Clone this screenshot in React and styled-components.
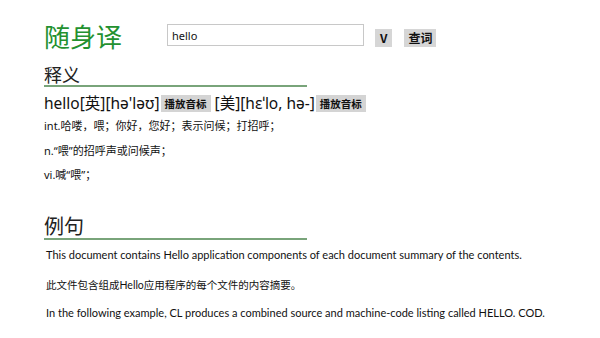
import React from "react";
import styled, { createGlobalStyle } from "styled-components";

const GlobalStyle = createGlobalStyle`
  body {
    margin: 0;
    background: #fff;
    font-family: "Noto Sans", "Noto Sans CJK SC", sans-serif;
    color: #111;
  }
`;

const Page = styled.div`
  width: 600px;
  height: 338px;
  overflow: hidden;
  padding: 18px 0 0 44px;
  box-sizing: border-box;
`;

const Header = styled.div`
  display: flex;
  align-items: flex-start;
  height: 36px;
`;

const Logo = styled.h1`
  margin: 0;
  font-family: "Noto Sans CJK SC", sans-serif;
  font-weight: 400;
  font-size: 26px;
  color: #23912f;
  width: 123px;
  line-height: 36px;
`;

const SearchInput = styled.input`
  width: 197px;
  height: 22px;
  margin-top: 6px;
  box-sizing: border-box;
  border: 1px solid #c8c8c8;
  padding: 0 4px;
  font-family: "Noto Sans", sans-serif;
  font-size: 11px;
  color: #111;
  outline: none;
`;

const GreyButton = styled.button`
  height: 18px;
  margin: 11px 0 0 ${(p) => p.$gap}px;
  padding: 0 ${(p) => p.$pad}px;
  border: none;
  background: #d6d6d6;
  font-family: "Noto Sans CJK SC", "Noto Sans", sans-serif;
  font-size: 12px;
  font-weight: 700;
  color: #111;
  line-height: 18px;
`;

const Section = styled.section`
  margin-top: ${(p) => p.$top}px;
`;

const SectionTitle = styled.h2`
  margin: 0;
  width: 263px;
  font-family: "Noto Sans CJK SC", sans-serif;
  font-weight: 400;
  font-size: ${(p) => p.$size}px;
  line-height: ${(p) => p.$lh}px;
  color: #222;
  border-bottom: 2px solid #79a47a;
`;

const Phonetic = styled.div`
  display: flex;
  align-items: center;
  margin-top: 4px;
  height: 22px;
  font-family: "Noto Sans", "Noto Sans CJK SC", sans-serif;
  font-size: 15.5px;
  color: #111;
  white-space: nowrap;
`;

const PlayButton = styled.span`
  display: inline-block;
  background: #d4d4d4;
  font-family: "Noto Sans CJK SC", sans-serif;
  font-size: 10.5px;
  font-weight: 700;
  line-height: 17px;
  padding: 0 4px;
  margin: 2px 4px 0 1px;
`;

const Meaning = styled.p`
  margin: ${(p) => p.$top}px 0 0 0;
  font-family: "Noto Sans", "Noto Sans CJK SC", sans-serif;
  font-size: 11px;
  line-height: 16px;
  color: #111;
`;

const Sentence = styled.p`
  margin: ${(p) => p.$top}px 0 0 2px;
  font-family: Lato, "Noto Sans CJK SC", sans-serif;
  font-size: ${(p) => p.$size || 11}px;
  line-height: 16px;
  color: #111;
  white-space: nowrap;
`;

export default function App() {
  return (
    <>
      <GlobalStyle />
      <Page>
        <Header>
          <Logo>随身译</Logo>
          <SearchInput defaultValue="hello" />
          <GreyButton $gap={11} $pad={5}>V</GreyButton>
          <GreyButton $gap={12} $pad={4}>查词</GreyButton>
        </Header>

        <Section $top={9}>
          <SectionTitle $size={18} $lh={22}>释义</SectionTitle>
          <Phonetic>
            hello[英][hə'ləʊ]
            <PlayButton>播放音标</PlayButton>
            [美][hɛˈlo, hə-]
            <PlayButton>播放音标</PlayButton>
          </Phonetic>
          <Meaning $top={5}>int.哈喽，喂；你好，您好；表示问候；打招呼；</Meaning>
          <Meaning $top={9}>n.“喂”的招呼声或问候声；</Meaning>
          <Meaning $top={8}>vi.喊“喂”；</Meaning>
        </Section>

        <Section $top={31}>
          <SectionTitle $size={20} $lh={24}>例句</SectionTitle>
          <Sentence $top={7}>This document contains Hello application components of each document summary of the contents.</Sentence>
          <Sentence $top={14} $size={10.5}>此文件包含组成Hello应用程序的每个文件的内容摘要。</Sentence>
          <Sentence $top={12}>In the following example, CL produces a combined source and machine-code listing called HELLO. COD.</Sentence>
        </Section>
      </Page>
    </>
  );
}
